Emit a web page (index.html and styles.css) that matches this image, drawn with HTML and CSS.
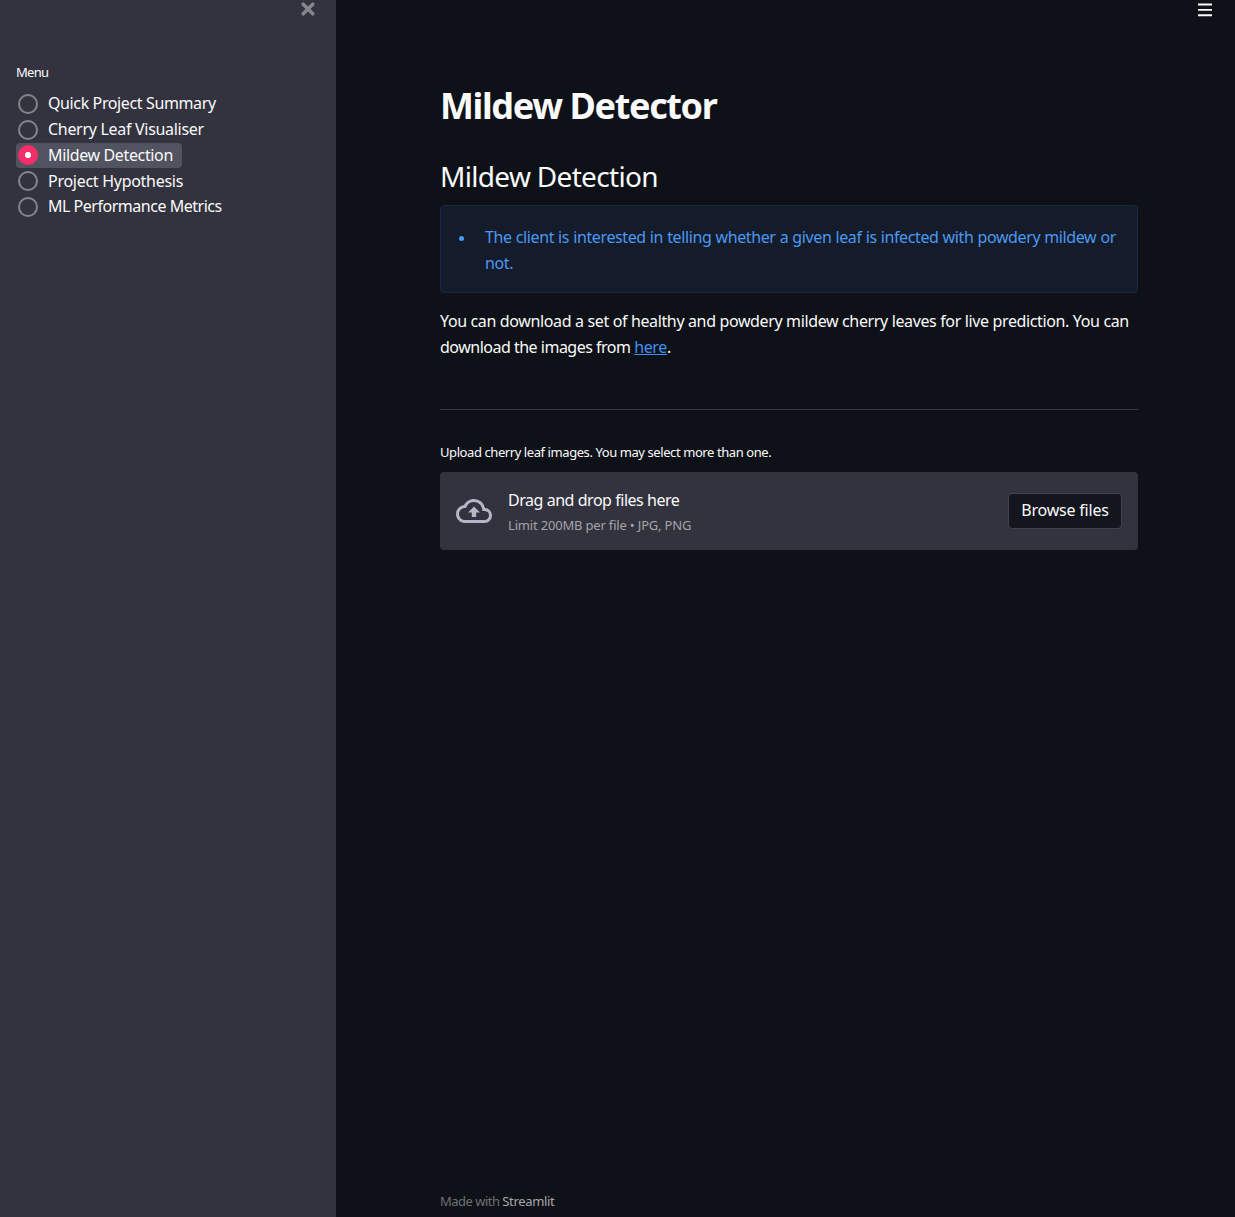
FILE: index.html
```html
<!DOCTYPE html>
<html lang="en">
<head>
<meta charset="utf-8">
<title>Mildew Detector</title>
<link rel="stylesheet" href="styles.css">
</head>
<body>
<div class="app">
  <aside class="sidebar">
    <button class="close" aria-label="Close sidebar"><svg width="14" height="14" viewBox="0 0 14 14"><path d="M2.2 2.2 11.8 11.8M11.8 2.2 2.2 11.8"/></svg></button>
    <div class="menu-label"><span>Menu</span></div>
    <nav class="menu">
      <a class="option"><i class="radio"></i><span class="m1">Quick Project Summary</span></a>
      <a class="option"><i class="radio"></i><span class="m2">Cherry Leaf Visualiser</span></a>
      <a class="option selected"><i class="radio"></i><span class="m3">Mildew Detection</span></a>
      <a class="option"><i class="radio"></i><span class="m4">Project Hypothesis</span></a>
      <a class="option"><i class="radio"></i><span class="m5">ML Performance Metrics</span></a>
    </nav>
  </aside>
  <main class="main">
    <header class="toolbar"><svg width="14" height="14" viewBox="0 0 14 14"><path d="M0 1.5h14M0 6.9h14M0 12.2h14"/></svg></header>
    <div class="content">
      <h1><span>Mildew Detector</span></h1>
      <h2><span>Mildew Detection</span></h2>
      <div class="info">
        <i class="bullet"></i>
        <p><span class="i1">The client is interested in telling whether a given leaf is infected with powdery mildew or</span><br><span class="i2">not.</span></p>
      </div>
      <p class="body"><span class="b1">You can download a set of healthy and powdery mildew cherry leaves for live prediction. You can</span><br><span class="b2">download the images from <a>here</a>.</span></p>
      <hr>
      <div class="upload-label"><span>Upload cherry leaf images. You may select more than one.</span></div>
      <section class="dropzone">
        <svg class="cloud" width="36" height="36" viewBox="0 0 24 24"><path d="M19.35 10.04A7.49 7.49 0 0 0 12 4C9.11 4 6.6 5.64 5.35 8.04A5.994 5.994 0 0 0 0 14c0 3.31 2.69 6 6 6h13c2.76 0 5-2.24 5-5 0-2.64-2.05-4.78-4.65-4.96zM19 18H6c-2.21 0-4-1.79-4-4 0-2.05 1.53-3.76 3.56-3.97l1.07-.11.5-.95A5.469 5.469 0 0 1 12 6c2.62 0 4.88 1.86 5.39 4.43l.3 1.5 1.53.11A2.98 2.98 0 0 1 22 15c0 1.65-1.35 3-3 3zM8 13h2.55v3h2.9v-3H16l-4-4z"/></svg>
        <div class="hint"><div class="drag"><span>Drag and drop files here</span></div><div class="limit"><span>Limit 200MB per file • JPG, PNG</span></div></div>
        <button class="browse"><span>Browse files</span></button>
      </section>
    </div>
    <footer><span>Made with <a>Streamlit</a></span></footer>
  </main>
</div>
</body>
</html>
```
FILE: styles.css
```css
* { box-sizing: border-box; }
body { margin: 0; background: #0e1117; color: #fafafa; font: 16px/26px "Noto Sans", sans-serif; }
h1, h2, p { margin: 0; }
span { white-space: nowrap; }
button { font: inherit; color: inherit; }
.app { display: flex; height: 1217px; overflow: hidden; }
.sidebar { width: 336px; flex: none; background: #33333f; padding: 2px 16px; display: flex; flex-direction: column; }
.close { align-self: flex-end; width: 14px; height: 14px; margin-right: 5px; padding: 0; border: 0; background: none; display: flex; }
.close svg { overflow: visible; }
.close path { stroke: #85858b; stroke-width: 3.6; stroke-linecap: round; fill: none; }
.menu-label { margin-top: 46px; height: 21px; font-size: 13px; line-height: 21px; letter-spacing: -.7px; }
.menu { display: flex; flex-direction: column; align-items: flex-start; margin-top: 8px; }
.option { display: flex; align-items: center; height: 25.75px; padding: 0 9px 0 2px; gap: 10px; border-radius: 4px; line-height: 25px; }
.m1 { letter-spacing: -.38px; }
.m2 { letter-spacing: -.3px; }
.m3 { letter-spacing: -.36px; }
.m4 { letter-spacing: -.28px; }
.m5 { letter-spacing: -.48px; }
.radio { width: 20px; height: 20px; flex: none; border: 2px solid #84848b; border-radius: 50%; }
.selected { background: #525360; }
.selected .radio { border: 0; background: radial-gradient(circle, #fafafa 2.8px, #f52d6a 3.4px); }
.main { flex: 1; display: flex; flex-direction: column; }
.toolbar { display: flex; justify-content: flex-end; height: 81px; padding: 3px 23px 0 0; }
.toolbar path { stroke: #fafafa; stroke-width: 1.9; }
.content { width: 698px; margin-left: 104px; flex: 1; }
h1 { font-size: 36px; line-height: 50px; font-weight: 700; letter-spacing: -1.36px; }
h2 { font-size: 28px; line-height: 40px; font-weight: 400; margin-top: 25px; letter-spacing: -.68px; }
.info { display: flex; height: 88px; margin-top: 9px; padding: 18px 16px; border: 1px solid #172841; border-radius: 4px; background: #141c2b; color: #4b98f0; }
.bullet { flex: none; width: 5px; height: 5px; margin: 12px 21px 0 2px; border-radius: 50%; background: currentColor; }
.i1, .i2 { letter-spacing: -.39px; word-spacing: .33px; }
.body { margin-top: 15px; }
.b1 { letter-spacing: -.37px; word-spacing: .05px; }
.b2 { letter-spacing: -.5px; }
.body a { color: #4090f5; text-decoration: underline; letter-spacing: -.35px; }
hr { margin: 49px 0 32px; height: 1px; border: 0; background: #373a40; }
.upload-label { height: 21px; font-size: 13px; line-height: 21px; letter-spacing: -.42px; }
.dropzone { display: flex; align-items: center; height: 78px; margin-top: 9px; padding: 0 16px; border-radius: 4px; background: #33333f; }
.cloud { fill: #b7b6c8; flex: none; }
.hint { margin-left: 16px; flex: 1; }
.drag { letter-spacing: -.46px; }
.limit { font-size: 13px; line-height: 21px; color: #a3a3a8; margin-top: 2px; letter-spacing: -.18px; }
.browse { width: 114px; height: 36px; padding: 0 0 2px; border: 1px solid #41424d; border-radius: 4px; background: #13161f; line-height: 24px; letter-spacing: -.2px; }
footer { margin: 0 0 5px 104px; height: 21px; font-size: 13px; line-height: 21px; color: #6e7075; letter-spacing: -.52px; }
footer a { color: #a7a8ac; letter-spacing: -.33px; }
```
